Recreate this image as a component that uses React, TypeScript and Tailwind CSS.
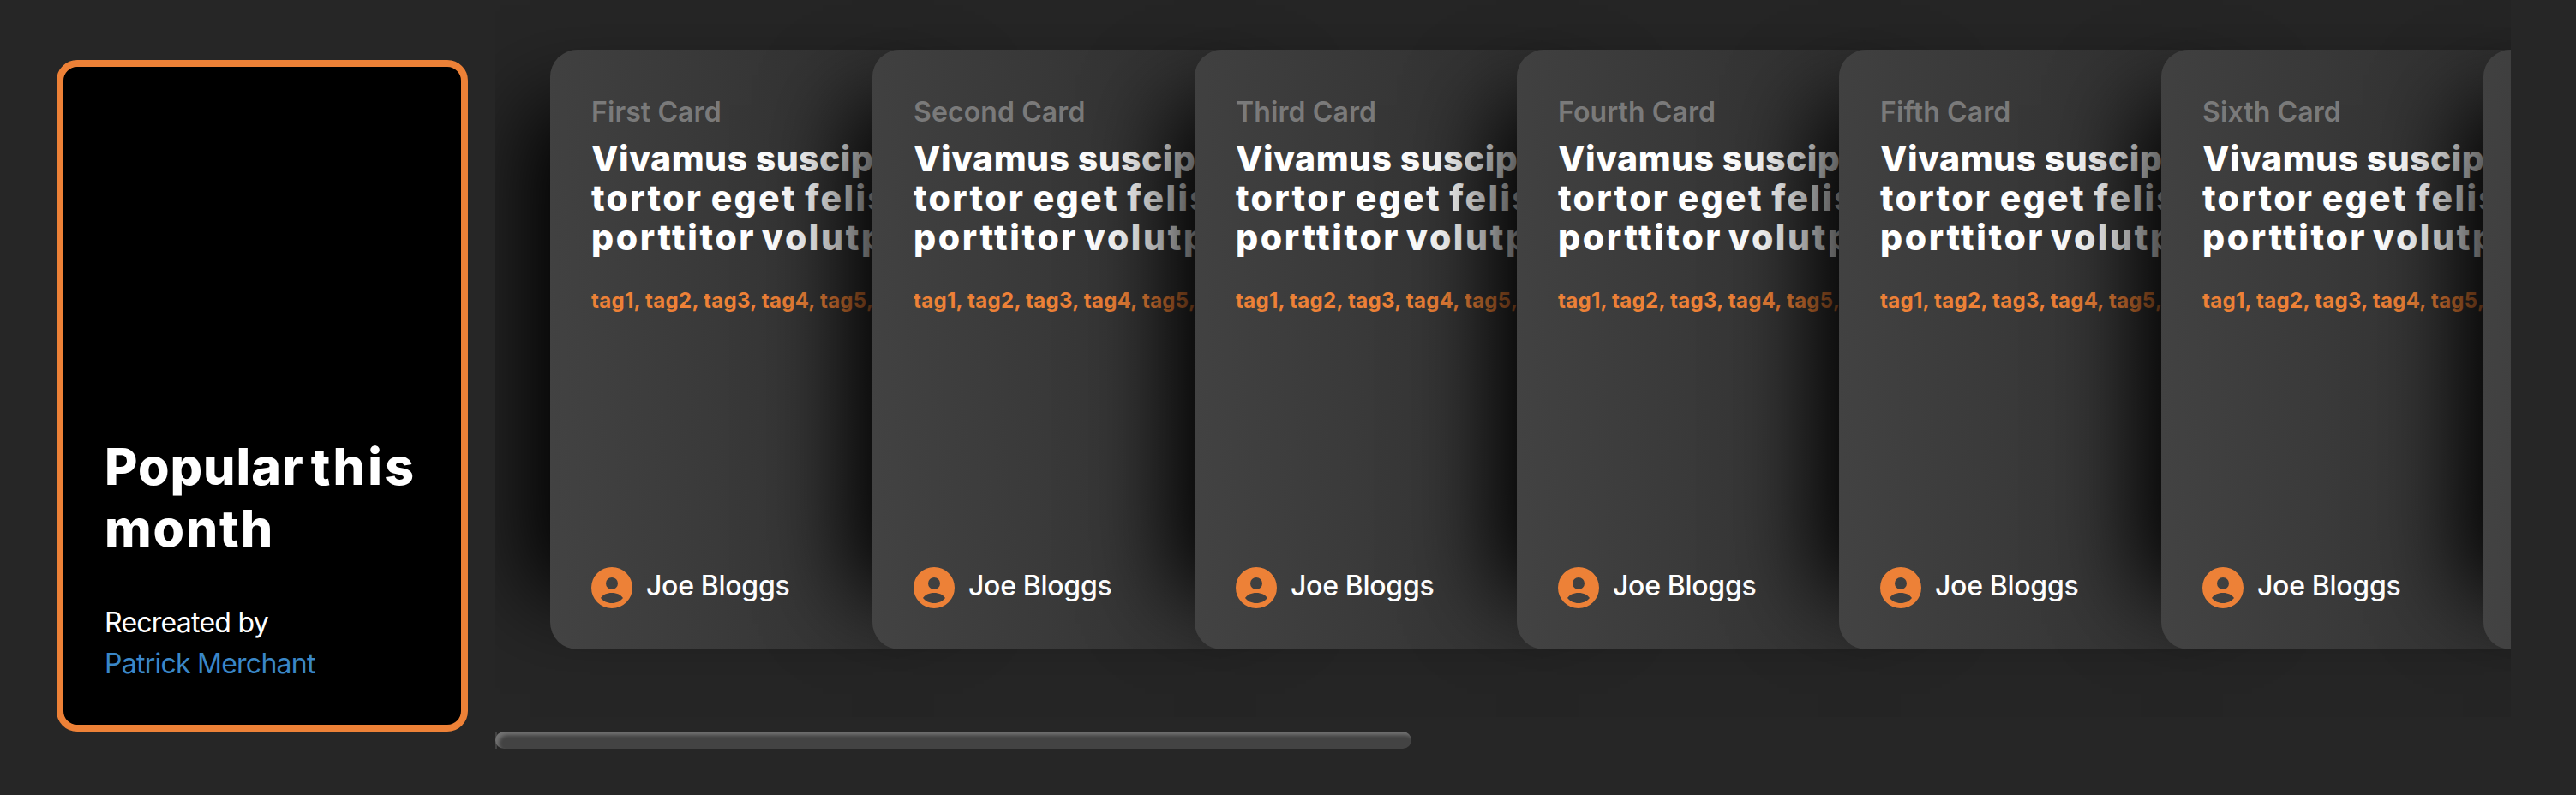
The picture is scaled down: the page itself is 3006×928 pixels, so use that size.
const names = ["First", "Second", "Third", "Fourth", "Fifth", "Sixth", "Seventh"];

function Avatar() {
  return (
    <svg viewBox="0 0 48 48" className="size-12 shrink-0">
      <path
        fill="#ed8137"
        fillRule="evenodd"
        d="M24 0a24 24 0 1 0 0 48a24 24 0 1 0 0-48zM24 12a7 7 0 1 1 0 14a7 7 0 1 1 0-14zM24 30c6 0 10.500 2.200 13 6c-3 3.800-7.500 6-13 6s-10-2.200-13-6c2.500-3.800 7-6 13-6z"
      />
    </svg>
  );
}

function Card({ name }: { name: string }) {
  return (
    <article className="-mr-[224px] flex h-[700px] w-[600px] shrink-0 flex-col rounded-[32px] bg-[linear-gradient(85deg,#434343,#262626)] p-12 shadow-[-88px_0_96px_-64px_#000]">
      <p className="mt-px text-[32px] leading-[48px] font-semibold tracking-[0.1px] text-[#7a7a7a]">{name} Card</p>
      <h2 className="mt-[7px] text-[41px] leading-[46px] font-extrabold whitespace-nowrap text-white">
        <span className="block tracking-[0.4px]">Vivamus suscipit</span>
        <span className="block tracking-[2.3px] [word-spacing:-2px]">tortor eget felis</span>
        <span className="block tracking-[2.6px] [word-spacing:-5px]">porttitor volutpat</span>
      </h2>
      <p className="mt-[35px] text-[24px] leading-8 font-bold tracking-[0.3px] whitespace-nowrap text-[#ed8137]">
        tag1, tag2, tag3, tag4, tag5, tag6
      </p>
      <div className="mt-auto flex h-12 items-center gap-4">
        <Avatar />
        <span className="-mt-1 text-[32px] leading-[48px] font-medium tracking-[-0.3px] text-white">Joe Bloggs</span>
      </div>
    </article>
  );
}

export default function App() {
  return (
    <div className="flex h-[928px] w-[3006px] overflow-hidden bg-[#262626] font-['Inter',sans-serif]">
      <aside className="mt-[70px] ml-[66px] flex h-[784px] w-[480px] shrink-0 flex-col justify-end rounded-[24px] border-8 border-[#ed8137] bg-black px-12 pb-[47px] text-white">
        <h1 className="text-[59px] leading-[72px] font-extrabold whitespace-nowrap">
          <span className="tracking-[1px]">Popular</span>
          <span className="ml-[-5px]"> </span>
          <span className="tracking-[3.2px]">this</span>
          <br />
          <span className="tracking-[1.8px]">month</span>
        </h1>
        <p className="mt-[50px] text-[32px] leading-[48px] tracking-[-0.75px]">
          Recreated by
          <br />
          <a className="text-[#3a87c8]">Patrick Merchant</a>
        </p>
      </aside>
      <main className="ml-8 flex h-[874px] w-[2352px] shrink-0 flex-col justify-between overflow-hidden">
        <div className="flex pt-[58px] pl-16">
          {names.map((name) => (
            <Card key={name} name={name} />
          ))}
        </div>
        <div className="w-[1069px] bg-[linear-gradient(90deg,#434343_2px,transparent_2px)]">
          <div className="h-5 rounded-[10px] bg-[#434343] shadow-[inset_4px_4px_4px_rgba(255,255,255,0.25)]" />
        </div>
      </main>
    </div>
  );
}
